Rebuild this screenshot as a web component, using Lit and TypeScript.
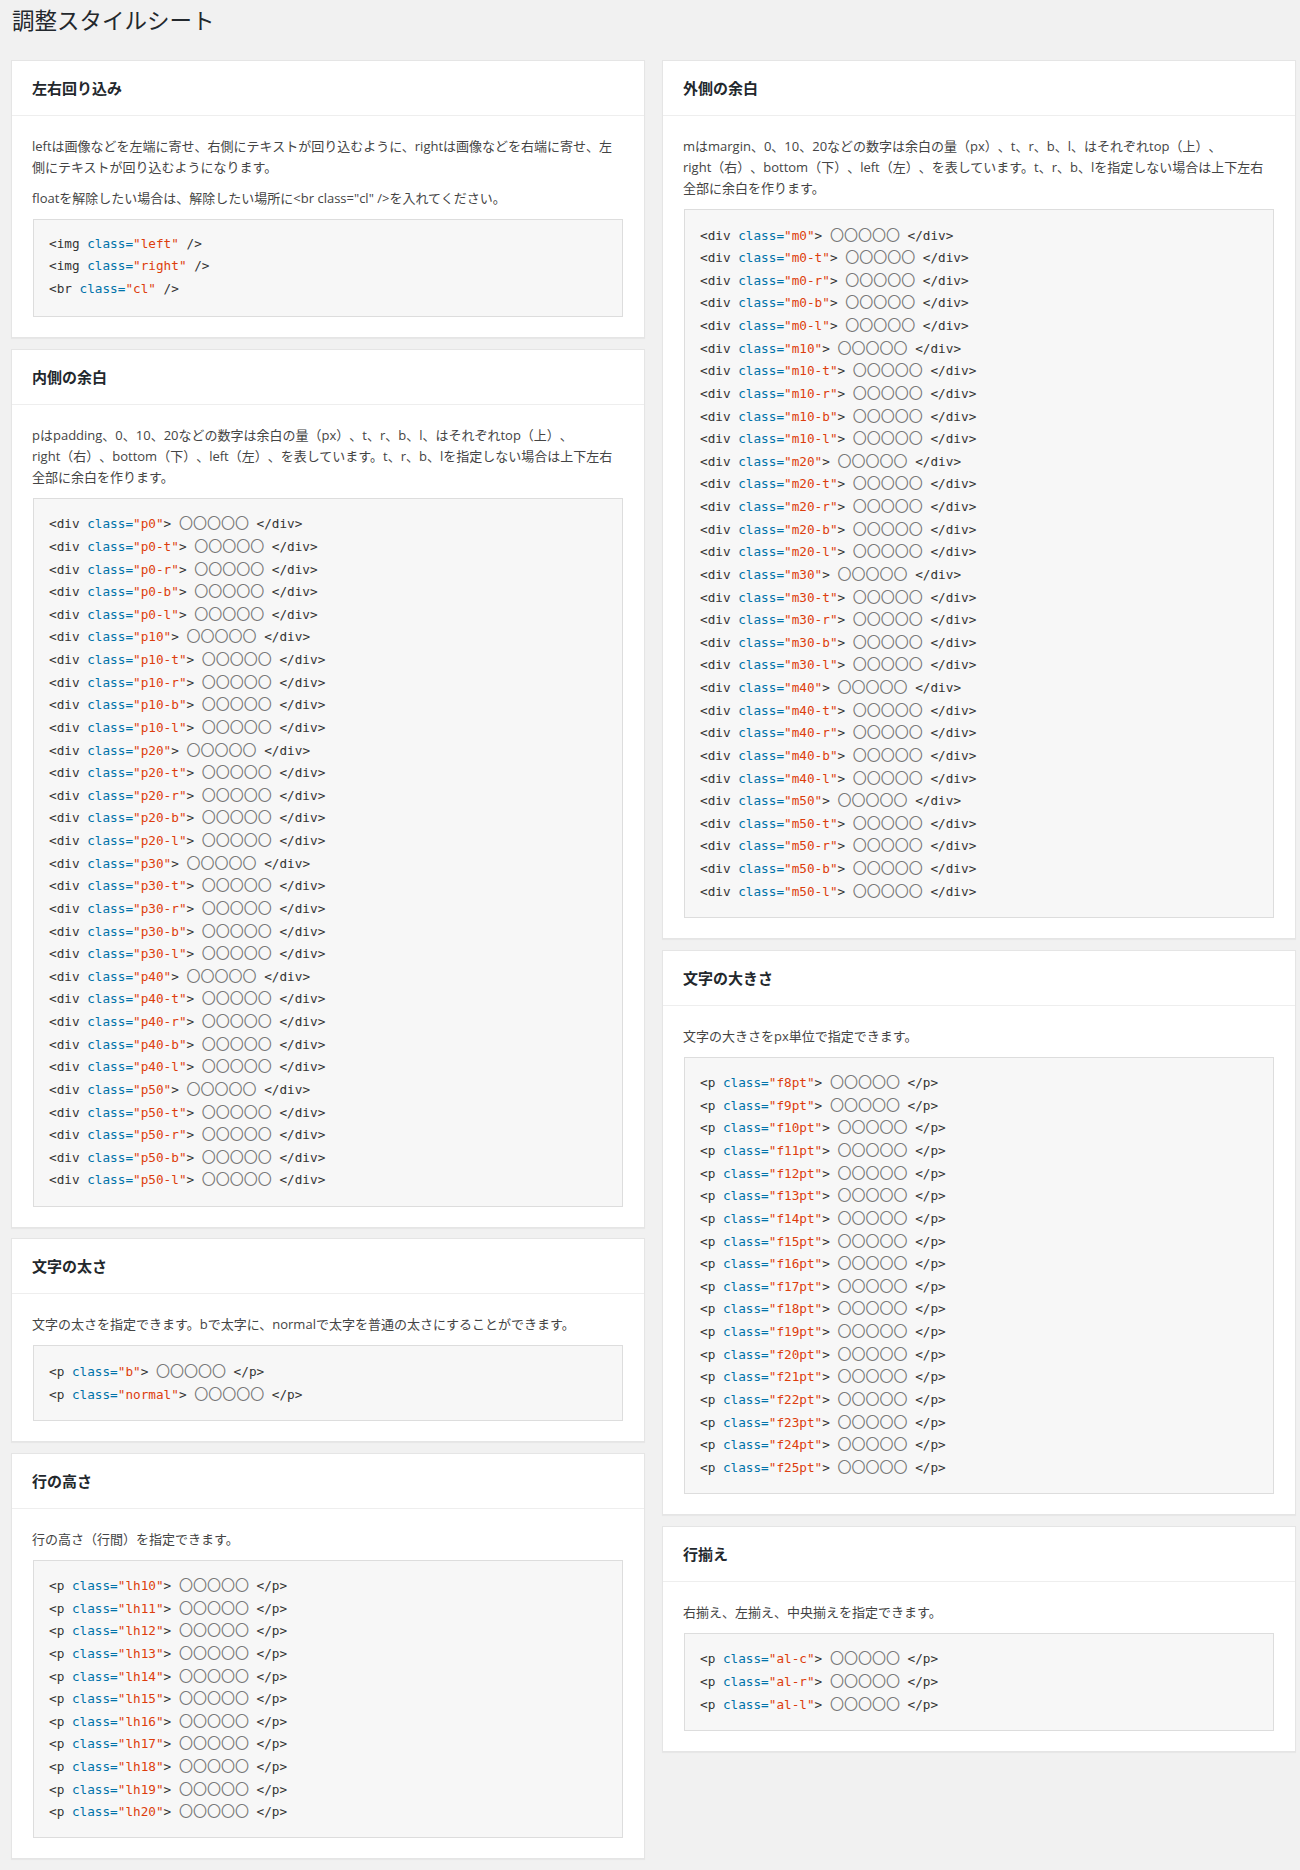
import { LitElement, html, css } from "lit";
import { customElement } from "lit/decorators.js";

const ring = "〇〇〇〇〇";
type Line = [string, string, string];

const divLines = (p: string): Line[] => {
  const out: Line[] = [];
  for (const n of ["0", "10", "20", "30", "40", "50"]) {
    for (const s of ["", "-t", "-r", "-b", "-l"]) out.push(["div", `${p}${n}${s}`, "div"]);
  }
  return out;
};
const pLines = (names: string[]): Line[] => names.map((n) => ["p", n, "p"] as Line);
const range = (pre: string, a: number, b: number, suf = "") => {
  const r: string[] = [];
  for (let i = a; i <= b; i++) r.push(`${pre}${i}${suf}`);
  return r;
};

@customElement("code-block")
class CodeBlock extends LitElement {
  static properties = { lines: { attribute: false }, raw: { attribute: false } };
  lines: Line[] = [];
  raw: [string, string][] = [];
  static styles = css`
    :host { display: block; }
    .box {
      background: #f7f7f7;
      border: 1px solid #ddd;
      padding: 12.5px 15px 15.5px;
      margin: 10px 0 0 1px;
      font-family: "DejaVu Sans Mono", monospace;
      font-size: 12.7px;
      color: #333;
    }
    .row { height: 22.64px; line-height: 22.64px; white-space: pre; }
    .k { color: #0073aa; }
    .v { color: #dd3d0c; }
    .o { font-family: "Noto Sans CJK JP", sans-serif; font-size: 14px; color: #777; }
  `;
  render() {
    return html`<div class="box">
      ${this.raw.map(([t, v]) => html`<div class="row">&lt;${t} <span class="k">class=</span><span class="v">"${v}"</span> /&gt;</div>`)}
      ${this.lines.map(([t, v, e]) => html`<div class="row">&lt;${t} <span class="k">class=</span><span class="v">"${v}"</span>&gt; <span class="o">${ring}</span> &lt;/${e}&gt;</div>`)}
    </div>`;
  }
}

@customElement("app-root")
class AppRoot extends LitElement {
  static styles = css`
    :host {
      display: block;
      box-sizing: border-box;
      height: 1870px;
      background: #f1f1f1;
      padding-left: 11px;
      overflow: hidden;
      font-family: "Open Sans", "Noto Sans CJK JP", sans-serif;
      font-size: 13px;
      color: #444;
      text-spacing-trim: space-all;
    }
    h1 {
      margin: 0;
      height: 60px;
      padding: 5px 0 0 1px;
      box-sizing: border-box;
      font-size: 22.5px;
      font-weight: 400;
      line-height: 32px;
      color: #23282d;
    }
    .cols { display: grid; grid-template-columns: 634px 634px; column-gap: 17px; align-items: start; }
    .col { display: flex; flex-direction: column; gap: 10.9px; }
    .card {
      background: #fff;
      border: 1px solid #e5e5e5;
      box-shadow: 0 1px 1px rgba(0, 0, 0, 0.04);
    }
    h2 {
      margin: 0;
      height: 55px;
      box-sizing: border-box;
      padding: 0 20px;
      border-bottom: 1px solid #eee;
      font-size: 15px;
      font-weight: 700;
      line-height: 54px;
      color: #23282d;
    }
    .body { padding: 20px 21px 20px 20px; }
    p { margin: 0 0 10px; line-height: 21px; }
    p:last-of-type { margin-bottom: 0; }
  `;

  render() {
    return html`
      <h1>調整スタイルシート</h1>
      <div class="cols">
        <div class="col">
          <section class="card">
            <h2>左右回り込み</h2>
            <div class="body">
              <p>leftは画像などを左端に寄せ、右側にテキストが回り込むように、rightは画像などを右端に寄せ、左側にテキストが回り込むようになります。</p>
              <p>floatを解除したい場合は、解除したい場所に&lt;br class="cl" /&gt;を入れてください。</p>
              <code-block .raw=${[["img", "left"], ["img", "right"], ["br", "cl"]]}></code-block>
            </div>
          </section>
          <section class="card">
            <h2>内側の余白</h2>
            <div class="body">
              <p>pはpadding、0、10、20などの数字は余白の量（px）、t、r、b、l、はそれぞれtop（上）、<br />right（右）、bottom（下）、left（左）、を表しています。t、r、b、lを指定しない場合は上下左右<br />全部に余白を作ります。</p>
              <code-block .lines=${divLines("p")}></code-block>
            </div>
          </section>
          <section class="card">
            <h2>文字の太さ</h2>
            <div class="body">
              <p>文字の太さを指定できます。bで太字に、normalで太字を普通の太さにすることができます。</p>
              <code-block .lines=${pLines(["b", "normal"])}></code-block>
            </div>
          </section>
          <section class="card">
            <h2>行の高さ</h2>
            <div class="body">
              <p>行の高さ（行間）を指定できます。</p>
              <code-block .lines=${pLines(range("lh", 10, 20))}></code-block>
            </div>
          </section>
        </div>
        <div class="col">
          <section class="card">
            <h2>外側の余白</h2>
            <div class="body">
              <p>mはmargin、0、10、20などの数字は余白の量（px）、t、r、b、l、はそれぞれtop（上）、<br />right（右）、bottom（下）、left（左）、を表しています。t、r、b、lを指定しない場合は上下左右<br />全部に余白を作ります。</p>
              <code-block .lines=${divLines("m")}></code-block>
            </div>
          </section>
          <section class="card">
            <h2>文字の大きさ</h2>
            <div class="body">
              <p>文字の大きさをpx単位で指定できます。</p>
              <code-block .lines=${pLines(range("f", 8, 25, "pt"))}></code-block>
            </div>
          </section>
          <section class="card">
            <h2>行揃え</h2>
            <div class="body">
              <p>右揃え、左揃え、中央揃えを指定できます。</p>
              <code-block .lines=${pLines(["al-c", "al-r", "al-l"])}></code-block>
            </div>
          </section>
        </div>
      </div>
    `;
  }
}
